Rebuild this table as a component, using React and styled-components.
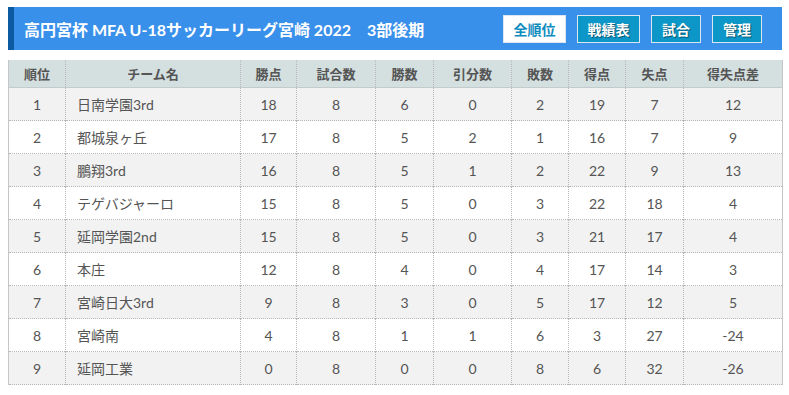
import React from 'react';
import styled, { createGlobalStyle } from 'styled-components';

const GlobalStyle = createGlobalStyle`
  body {
    margin: 0;
    background: #fff;
    font-family: Lato, "Noto Sans CJK JP", sans-serif;
  }
`;

const Page = styled.div`
  padding: 7px 7px 0 8px;
`;

const TitleBar = styled.div`
  display: flex;
  align-items: center;
  justify-content: space-between;
  height: 43px;
  background: #3990ea;
  border-left: 6px solid #0b5aa2;
  padding: 0 20px 0 10px;
  box-sizing: border-box;
`;

const Title = styled.h1`
  margin: 0;
  font-size: 16px;
  font-weight: 700;
  color: #fff;
  white-space: pre;
`;

const Nav = styled.div`
  display: flex;
  gap: 11px;
`;

const NavButton = styled.a`
  display: flex;
  align-items: center;
  justify-content: center;
  height: 28px;
  width: ${p => p.$w}px;
  box-sizing: border-box;
  border: 1px solid #dde6ee;
  background: ${p => (p.$active ? '#fff' : '#0d97c8')};
  color: ${p => (p.$active ? '#0d8cc0' : '#fff')};
  text-shadow: ${p => (p.$active ? 'none' : '1px 1px 1px rgba(0,0,0,0.45)')};
  font-size: 14px;
  font-weight: 700;
  text-decoration: none;
`;

const Table = styled.table`
  margin-top: 10px;
  width: 774px;
  border-collapse: collapse;
  table-layout: fixed;
  border-left: 1px solid #c6c6c6;
  border-right: 1px solid #c6c6c6;
  border-bottom: 1px dotted #b8b8b8;
  color: #555;
`;

const Th = styled.th`
  height: 27px;
  padding: 0;
  background: #d4dfdf;
  border-bottom: 1px solid #c2cccc;
  border-left: 1px dotted #b8b8b8;
  font-size: 13px;
  font-weight: 700;
  color: #555;
  text-align: center;
  &:first-child { border-left: none; }
`;

const Row = styled.tr`
  background: ${p => (p.$odd ? '#f2f2f2' : '#fff')};
`;

const Td = styled.td`
  height: 32px;
  padding: ${p => (p.$left ? '0 0 0 11px' : '0')};
  border-top: 1px dotted #b8b8b8;
  border-left: 1px dotted #b8b8b8;
  font-size: 14px;
  text-align: ${p => (p.$left ? 'left' : 'center')};
  &:first-child { border-left: none; }
`;

const columns = [
  ['順位', 57],
  ['チーム名', 175],
  ['勝点', 56],
  ['試合数', 79],
  ['勝数', 58],
  ['引分数', 78],
  ['敗数', 57],
  ['得点', 57],
  ['失点', 58],
  ['得失点差', 99],
];

const rows = [
  [1, '日南学園3rd', 18, 8, 6, 0, 2, 19, 7, 12],
  [2, '都城泉ヶ丘', 17, 8, 5, 2, 1, 16, 7, 9],
  [3, '鵬翔3rd', 16, 8, 5, 1, 2, 22, 9, 13],
  [4, 'テゲバジャーロ', 15, 8, 5, 0, 3, 22, 18, 4],
  [5, '延岡学園2nd', 15, 8, 5, 0, 3, 21, 17, 4],
  [6, '本庄', 12, 8, 4, 0, 4, 17, 14, 3],
  [7, '宮崎日大3rd', 9, 8, 3, 0, 5, 17, 12, 5],
  [8, '宮崎南', 4, 8, 1, 1, 6, 3, 27, -24],
  [9, '延岡工業', 0, 8, 0, 0, 8, 6, 32, -26],
];

const buttons = [
  ['全順位', 63, true],
  ['戦績表', 63, false],
  ['試合', 50, false],
  ['管理', 50, false],
];

export default function App() {
  return (
    <Page>
      <GlobalStyle />
      <TitleBar>
        <Title>{'高円宮杯 MFA U-18サッカーリーグ宮崎 2022　3部後期'}</Title>
        <Nav>
          {buttons.map(([label, w, active]) => (
            <NavButton key={label} $w={w} $active={active}>
              {label}
            </NavButton>
          ))}
        </Nav>
      </TitleBar>
      <Table>
        <colgroup>
          {columns.map(([name, w]) => (
            <col key={name} style={{ width: w }} />
          ))}
        </colgroup>
        <thead>
          <tr>
            {columns.map(([name]) => (
              <Th key={name}>{name}</Th>
            ))}
          </tr>
        </thead>
        <tbody>
          {rows.map((r, i) => (
            <Row key={r[0]} $odd={i % 2 === 0}>
              {r.map((v, j) => (
                <Td key={j} $left={j === 1}>
                  {v}
                </Td>
              ))}
            </Row>
          ))}
        </tbody>
      </Table>
    </Page>
  );
}
